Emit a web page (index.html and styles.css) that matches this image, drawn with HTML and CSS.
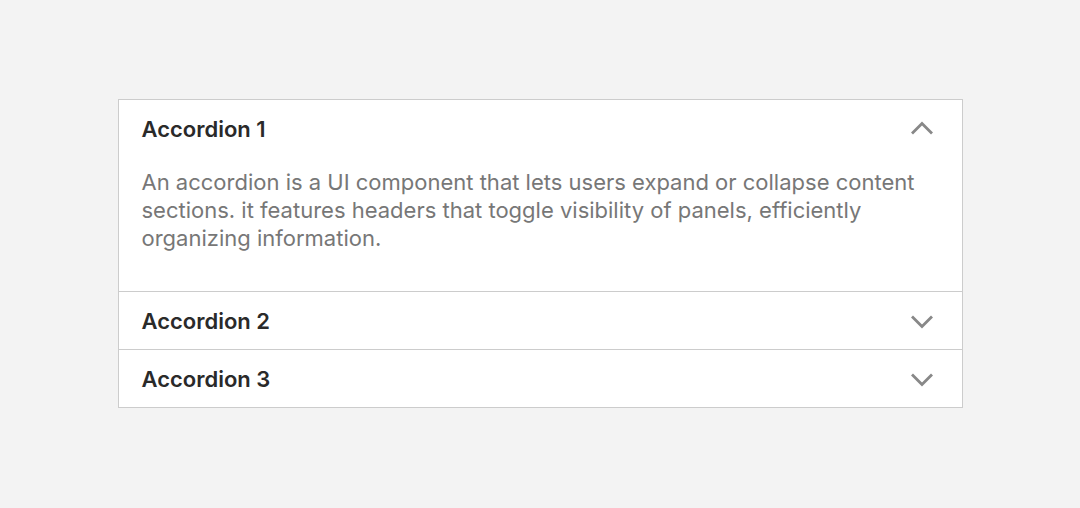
FILE: index.html
```html
<!DOCTYPE html>
<html>
<head>
    <title>Accordion</title>
    <link rel="stylesheet" href="styles.css">
</head>
<body>
    <div class="accordion">
        <div class="item open">
            <div class="header">
                <span class="title">Accordion 1</span>
                <svg class="chevron" width="24" height="24" viewBox="0 0 24 24"><path d="M2 16.5l10-10 10 10"/></svg>
            </div>
            <div class="content">
                An accordion is a UI component that lets users expand or collapse content sections. it features headers that toggle visibility of panels, efficiently organizing information.
            </div>
        </div>
        <div class="item">
            <div class="header">
                <span class="title">Accordion 2</span>
                <svg class="chevron" width="24" height="24" viewBox="0 0 24 24"><path d="M2 7.5l10 10 10-10"/></svg>
            </div>
        </div>
        <div class="item">
            <div class="header">
                <span class="title">Accordion 3</span>
                <svg class="chevron" width="24" height="24" viewBox="0 0 24 24"><path d="M2 7.5l10 10 10-10"/></svg>
            </div>
        </div>
    </div>
</body>
</html>
```

FILE: styles.css
```css
body {
    margin: 0;
    background-color: #f3f3f3;
    font-family: Inter, "Noto Sans", sans-serif;
    height: 508px;
    display: flex;
    justify-content: center;
    padding-top: 99px;
    box-sizing: border-box;
}

.accordion {
    width: 845px;
    height: 309px;
    background-color: white;
    border: 1px solid #cccccc;
    box-sizing: border-box;
}

.item + .item {
    border-top: 1px solid #cccccc;
}

.header {
    display: flex;
    align-items: center;
    justify-content: space-between;
    height: 57px;
    padding: 0 28px 0 23px;
}

.title {
    font-size: 22px;
    font-weight: 600;
    color: #2a2a2a;
}

.chevron {
    width: 24px;
    height: 24px;
}

.chevron path {
    fill: none;
    stroke: #888888;
    stroke-width: 2.8;
}

.content {
    padding: 11px 40px 39px 23px;
    font-size: 22px;
    line-height: 28px;
    color: #777777;
}
```
